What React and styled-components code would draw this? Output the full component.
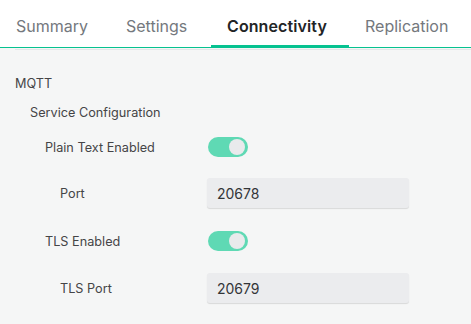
import React from "react";
import styled, { createGlobalStyle } from "styled-components";

const Global = createGlobalStyle`
  html, body { margin: 0; padding: 0; background: #f5f6f6; }
  body { font-family: Inter, "Noto Sans", "Liberation Sans", sans-serif; }
  * { box-sizing: border-box; }
`;

const Page = styled.div`
  width: 471px;
  height: 324px;
  overflow: hidden;
  background: #f5f6f6;
`;

const TabBar = styled.nav`
  display: flex;
  height: 48px;
  background: #fff;
  box-shadow: inset 0 -1px 0 #06c290;
`;

const Tab = styled.div`
  display: flex;
  align-items: center;
  width: ${(p) => p.$w}px;
  height: 48px;
  padding: 6px 0 0 16px;
  border-bottom: 3px solid ${(p) => (p.$active ? "#06c290" : "transparent")};
  font-size: 16px;
  font-weight: ${(p) => (p.$active ? 600 : 400)};
  color: ${(p) => (p.$active ? "#222426" : "#74787d")};
  letter-spacing: ${(p) => (p.$active ? "0.1px" : "0")};
`;

const Content = styled.section`
  margin: 1px 0 0 15px;
  border-top: 1px solid #e4e6e7;
  padding-top: 23px;
`;

const Heading = styled.div`
  height: 20px;
  display: flex;
  align-items: center;
  padding-left: ${(p) => p.$indent}px;
  margin-top: ${(p) => p.$mt || 0}px;
  font-size: 12.7px;
  color: #454547;
`;

const Row = styled.div`
  display: grid;
  grid-template-columns: 192px 202px;
  align-items: center;
  height: 30px;
  margin-top: ${(p) => p.$mt}px;
`;

const Label = styled.div`
  padding-left: ${(p) => p.$indent}px;
  font-size: 12.7px;
  color: #454547;
`;

const Switch = styled.div`
  position: relative;
  width: 40px;
  height: 20px;
  margin-left: 1px;
  border-radius: 10px;
  background: #5fd9b4;
  &::after {
    content: "";
    position: absolute;
    top: 2px;
    right: 3px;
    width: 16px;
    height: 16px;
    border-radius: 50%;
    background: #e9eaec;
  }
`;

const Field = styled.div`
  display: flex;
  align-items: center;
  height: 30px;
  padding-left: 10px;
  background: #ebecee;
  border-radius: 3px;
  box-shadow: 0 1px 1px rgba(0, 0, 0, 0.12);
  font-size: 14px;
  color: #333538;
`;

const tabs = [
  { name: "Summary", w: 110 },
  { name: "Settings", w: 101 },
  { name: "Connectivity", w: 138, active: true },
  { name: "Replication", w: 122 },
];

export default function App() {
  return (
    <Page>
      <Global />
      <TabBar>
        {tabs.map((t) => (
          <Tab key={t.name} $w={t.w} $active={t.active}>
            {t.name}
          </Tab>
        ))}
      </TabBar>
      <Content>
        <Heading $indent={0}>MQTT</Heading>
        <Heading $indent={15} $mt={9}>Service Configuration</Heading>
        <Row $mt={10}>
          <Label $indent={30}>Plain Text Enabled</Label>
          <Switch />
        </Row>
        <Row $mt={16}>
          <Label $indent={45}>Port</Label>
          <Field>20678</Field>
        </Row>
        <Row $mt={18}>
          <Label $indent={30}>TLS Enabled</Label>
          <Switch />
        </Row>
        <Row $mt={17}>
          <Label $indent={45}>TLS Port</Label>
          <Field>20679</Field>
        </Row>
      </Content>
    </Page>
  );
}
